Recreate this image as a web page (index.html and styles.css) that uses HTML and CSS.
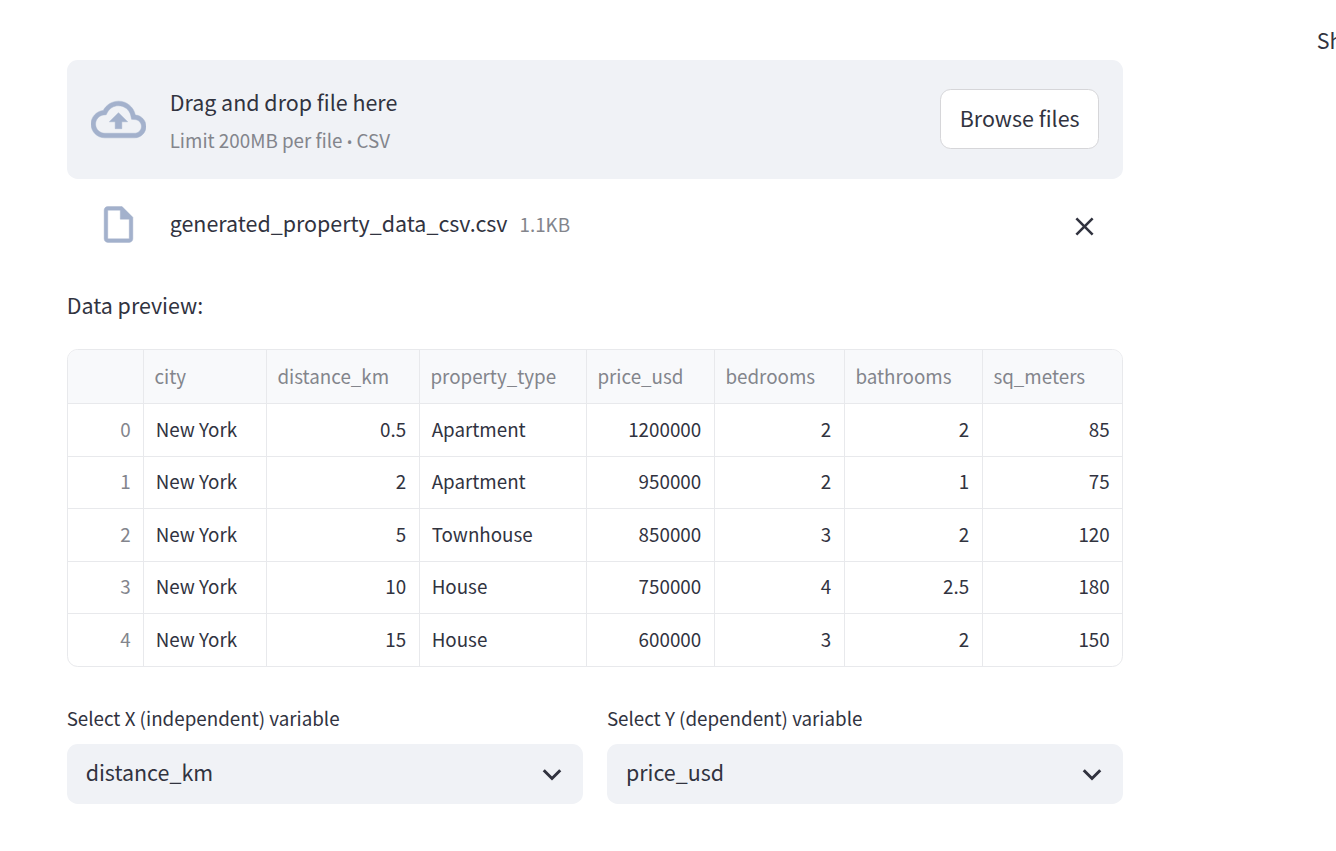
FILE: index.html
```html
<!DOCTYPE html>
<html lang="en">
<head>
    <meta charset="UTF-8">
    <title>Property data</title>
    <link rel="stylesheet" href="styles.css">
</head>
<body>

    <main class="main-column">

        <section class="uploader">
            <svg class="cloud-icon" viewBox="0 0 24 24"><path d="M19.35 10.04C18.67 6.59 15.64 4 12 4 9.11 4 6.6 5.64 5.35 8.04 2.34 8.36 0 10.91 0 14c0 3.31 2.69 6 6 6h13c2.76 0 5-2.24 5-5 0-2.64-2.05-4.78-4.65-4.96zM19 18H6c-2.21 0-4-1.79-4-4 0-2.05 1.53-3.76 3.56-3.97l1.07-.11.5-.95C8.08 7.14 9.94 6 12 6c2.62 0 4.88 1.86 5.39 4.43l.3 1.5 1.53.11c1.56.1 2.78 1.41 2.78 2.96 0 1.65-1.35 3-3 3zM8 13h2.55v3h2.9v-3H16l-4-4z"/></svg>
            <div class="uploader-text">
                <div class="uploader-title">Drag and drop file here</div>
                <div class="uploader-hint">Limit 200MB per file <span class="dot">•</span> CSV</div>
            </div>
            <button class="browse-btn">Browse files</button>
        </section>

        <section class="file-row">
            <svg class="file-icon" viewBox="0 0 24 24"><path d="M14 2H6c-1.1 0-2 .9-2 2v16c0 1.1.89 2 1.99 2H18c1.1 0 2-.9 2-2V8l-6-6zM6 20V4h7v5h5v11H6z"/></svg>
            <span class="file-name">generated_property_data_csv.csv</span>
            <span class="file-size">1.1KB</span>
            <svg class="close-icon" viewBox="0 0 24 24"><path d="M19 6.41L17.59 5 12 10.59 6.41 5 5 6.41 10.59 12 5 17.59 6.41 19 12 13.41 17.59 19 19 17.59 13.41 12z"/></svg>
        </section>

        <p class="preview-label">Data preview:</p>

        <div class="table-wrap">
            <table class="data-table">
                <colgroup>
                    <col class="col-index"><col class="col-city"><col class="col-distance"><col class="col-type">
                    <col class="col-price"><col class="col-bed"><col class="col-bath"><col class="col-sq">
                </colgroup>
                <thead>
                    <tr><th></th><th>city</th><th>distance_km</th><th>property_type</th><th>price_usd</th><th>bedrooms</th><th>bathrooms</th><th>sq_meters</th></tr>
                </thead>
                <tbody>
                    <tr><td class="idx">0</td><td>New York</td><td class="num">0.5</td><td>Apartment</td><td class="num">1200000</td><td class="num">2</td><td class="num">2</td><td class="num">85</td></tr>
                    <tr><td class="idx">1</td><td>New York</td><td class="num">2</td><td>Apartment</td><td class="num">950000</td><td class="num">2</td><td class="num">1</td><td class="num">75</td></tr>
                    <tr><td class="idx">2</td><td>New York</td><td class="num">5</td><td>Townhouse</td><td class="num">850000</td><td class="num">3</td><td class="num">2</td><td class="num">120</td></tr>
                    <tr><td class="idx">3</td><td>New York</td><td class="num">10</td><td>House</td><td class="num">750000</td><td class="num">4</td><td class="num">2.5</td><td class="num">180</td></tr>
                    <tr><td class="idx">4</td><td>New York</td><td class="num">15</td><td>House</td><td class="num">600000</td><td class="num">3</td><td class="num">2</td><td class="num">150</td></tr>
                </tbody>
            </table>
        </div>

        <section class="select-row">
            <div class="select-group">
                <label class="select-label">Select X (independent) variable</label>
                <div class="select-box">
                    <span class="select-value">distance_km</span>
                    <svg class="chevron" viewBox="0 0 16 16"><path d="M2.5 5.5L8 11l5.5-5.5"/></svg>
                </div>
            </div>
            <div class="select-group">
                <label class="select-label">Select Y (dependent) variable</label>
                <div class="select-box">
                    <span class="select-value">price_usd</span>
                    <svg class="chevron" viewBox="0 0 16 16"><path d="M2.5 5.5L8 11l5.5-5.5"/></svg>
                </div>
            </div>
        </section>

    </main>

    <aside class="side-note">Show</aside>

</body>
</html>
```

FILE: styles.css
```css
:root {
    --c-text: #31333f;
    --c-muted: #83858c;
    --c-panel: #f0f2f6;
    --c-line: #e8e9ec;
    --c-icon: #a3b1cc;
}
html, body {
    height: 100%;
}
body {
    margin: 0;
    overflow: hidden;
    display: flex;
    background: #fff;
    color: var(--c-text);
    font-family: "Noto Sans CJK SC", "Noto Sans", sans-serif;
    font-size: 21.45px;
    line-height: 30px;
}
.main-column {
    flex: 0 0 1055.5px;
    margin-left: 66.67px;
    padding-top: 60px;
}
.side-note {
    flex: none;
    margin-left: 193.5px;
    padding-top: 25px;
}
.uploader {
    display: flex;
    align-items: center;
    height: 119px;
    padding: 0 24px;
    background: var(--c-panel);
    border-radius: 10.67px;
    box-sizing: border-box;
}
.cloud-icon {
    width: 55px;
    height: 55px;
    fill: var(--c-icon);
    stroke: var(--c-icon);
    stroke-width: 0.2;
    flex: none;
}
.uploader-text {
    flex: 1;
    margin-left: 24px;
}
.uploader-title {
    line-height: 30px;
    margin-top: 2px;
}
.uploader-hint {
    margin-top: 10px;
    font-size: 18.8px;
    line-height: 26px;
    color: var(--c-muted);
}
.dot {
    font-family: "Noto Sans", sans-serif;
    font-size: 15px;
}
.browse-btn {
    width: 159px;
    height: 60px;
    margin-top: -1px;
    padding: 0 0 2px;
    background: #fff;
    border: 1px solid #d6d6d9;
    border-radius: 10.67px;
    color: var(--c-text);
    font: inherit;
}
.file-row {
    display: flex;
    align-items: center;
    height: 90px;
    padding-left: 30px;
}
.file-icon {
    width: 43px;
    height: 43px;
    fill: var(--c-icon);
    stroke: var(--c-icon);
    stroke-width: 0.25;
    flex: none;
}
.file-name {
    margin-left: 30px;
    margin-top: -2px;
}
.file-size {
    margin-left: 12px;
    margin-top: 0;
    font-size: 18.8px;
    color: var(--c-muted);
}
.close-icon {
    width: 31px;
    height: 31px;
    margin-left: auto;
    margin-right: 23.5px;
    margin-top: 4px;
    fill: var(--c-text);
}
.preview-label {
    margin: 21px 0 0;
}
.table-wrap {
    margin-top: 29px;
    border: 1px solid var(--c-line);
    border-radius: 10.67px;
    overflow: hidden;
    height: 318px;
    box-sizing: border-box;
}
.data-table {
    width: 1055.5px;
    margin: -1px;
    table-layout: fixed;
    border-collapse: collapse;
}
.col-index { width: 76px; }
.col-city { width: 123px; }
.col-distance { width: 153px; }
.col-type { width: 167px; }
.col-price { width: 128px; }
.col-bed { width: 130px; }
.col-bath { width: 138px; }
.col-sq { width: 140.5px; }
.data-table th,
.data-table td {
    height: 52.5px;
    padding: 0 12px 2.5px;
    box-sizing: border-box;
    border: 1.5px solid var(--c-line);
    font-size: 18.8px;
    line-height: 30px;
    font-weight: 400;
    text-align: left;
    white-space: nowrap;
}
.data-table th {
    padding: 0 12px 2px 10.75px;
    background: #f8f9fb;
    color: var(--c-muted);
    height: 54px;
}
.data-table .num,
.data-table .idx {
    text-align: right;
}
.data-table .num {
    padding-right: 12.5px;
}
.data-table .idx {
    color: var(--c-muted);
}
.select-row {
    display: flex;
    gap: 24px;
    margin-top: 36px;
}
.select-group {
    flex: 1;
}
.select-label {
    display: block;
    font-size: 18.8px;
    line-height: 30px;
    margin-bottom: 11px;
}
.select-box {
    display: flex;
    align-items: center;
    justify-content: space-between;
    height: 60px;
    padding: 0 19px;
    background: var(--c-panel);
    border-radius: 10.67px;
}
.select-value {
    margin-top: -4px;
}
.chevron {
    width: 24px;
    height: 24px;
    margin-top: -1px;
    fill: none;
    stroke: var(--c-text);
    stroke-width: 2;
}
```
